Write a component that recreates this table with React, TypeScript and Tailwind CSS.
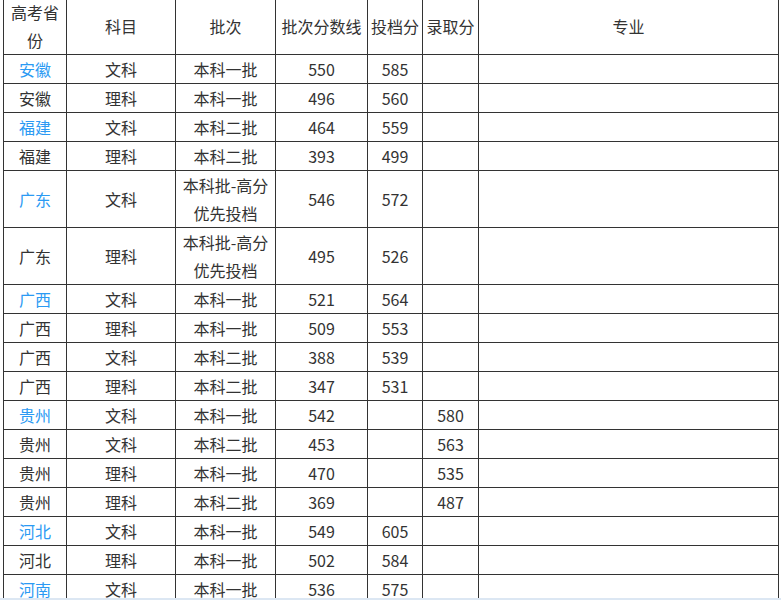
import React from 'react';

type Row = {
  prov: string;
  link?: boolean;
  subject: string;
  batch: string[];
  line: string;
  toudang?: string;
  luqu?: string;
};

const rows: Row[] = [
  { prov: '安徽', link: true, subject: '文科', batch: ['本科一批'], line: '550', toudang: '585' },
  { prov: '安徽', subject: '理科', batch: ['本科一批'], line: '496', toudang: '560' },
  { prov: '福建', link: true, subject: '文科', batch: ['本科二批'], line: '464', toudang: '559' },
  { prov: '福建', subject: '理科', batch: ['本科二批'], line: '393', toudang: '499' },
  { prov: '广东', link: true, subject: '文科', batch: ['本科批-高分', '优先投档'], line: '546', toudang: '572' },
  { prov: '广东', subject: '理科', batch: ['本科批-高分', '优先投档'], line: '495', toudang: '526' },
  { prov: '广西', link: true, subject: '文科', batch: ['本科一批'], line: '521', toudang: '564' },
  { prov: '广西', subject: '理科', batch: ['本科一批'], line: '509', toudang: '553' },
  { prov: '广西', subject: '文科', batch: ['本科二批'], line: '388', toudang: '539' },
  { prov: '广西', subject: '理科', batch: ['本科二批'], line: '347', toudang: '531' },
  { prov: '贵州', link: true, subject: '文科', batch: ['本科一批'], line: '542', luqu: '580' },
  { prov: '贵州', subject: '文科', batch: ['本科二批'], line: '453', luqu: '563' },
  { prov: '贵州', subject: '理科', batch: ['本科一批'], line: '470', luqu: '535' },
  { prov: '贵州', subject: '理科', batch: ['本科二批'], line: '369', luqu: '487' },
  { prov: '河北', link: true, subject: '文科', batch: ['本科一批'], line: '549', toudang: '605' },
  { prov: '河北', subject: '理科', batch: ['本科一批'], line: '502', toudang: '584' },
  { prov: '河南', link: true, subject: '文科', batch: ['本科一批'], line: '536', toudang: '575' },
  { prov: '河南', subject: '理科', batch: ['本科一批'], line: '517', toudang: '560' },
];

const cell = 'border-r border-b border-[#333333] flex flex-col items-center justify-center text-center';

export default function App() {
  return (
    <div
      className="h-[600px] flex flex-col bg-white text-[#333333] text-[16px] leading-[28px]"
      style={{ fontFamily: '"Noto Sans CJK SC", "Noto Sans", sans-serif' }}
    >
      <div className="flex-1 overflow-hidden">
        <div className="ml-[3px] -mt-[3px] w-[776px] grid grid-cols-[63px_109px_100px_92px_55px_56px_300px] border-l border-t border-[#333333]">
          {/* header */}
          <div className={cell}>
            <span>高考省</span>
            <span>份</span>
          </div>
          <div className={cell}>科目</div>
          <div className={cell}>批次</div>
          <div className={cell}>批次分数线</div>
          <div className={cell}>投档分</div>
          <div className={cell}>录取分</div>
          <div className={cell}>专业</div>

          {rows.map((r, i) => (
            <React.Fragment key={i}>
              <div className={`${cell} ${r.link ? 'text-[#2b9af3]' : ''}`}>{r.prov}</div>
              <div className={cell}>{r.subject}</div>
              <div className={cell}>
                {r.batch.map((b) => (
                  <span key={b}>{b}</span>
                ))}
              </div>
              <div className={cell}>{r.line}</div>
              <div className={cell}>{r.toudang || '\u00a0'}</div>
              <div className={cell}>{r.luqu || '\u00a0'}</div>
              <div className={cell}>{'\u00a0'}</div>
            </React.Fragment>
          ))}
        </div>
      </div>
      <div className="h-[2px] bg-[#dce7f3]" />
    </div>
  );
}
